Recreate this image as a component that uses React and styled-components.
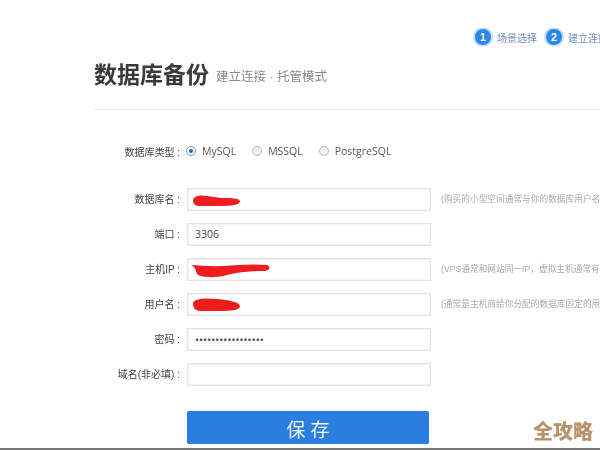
import React from "react";
import styled, { createGlobalStyle } from "styled-components";

const Global = createGlobalStyle`
  html, body { margin: 0; padding: 0; background: #fff; }
  body { width: 600px; height: 450px; overflow: hidden; font-family: "Liberation Sans", "Noto Sans CJK SC", sans-serif; }
`;
const Page = styled.div`
  position: relative; width: 600px; height: 450px; overflow: hidden; background: #fff;
  border-bottom: 2px solid #777; box-sizing: border-box;
`;
const Soft = styled.div`
  filter: blur(0.45px); height: 100%; padding: 28px 0 0 94px; box-sizing: border-box;
`;
const Steps = styled.div`
  display: flex; align-items: center; gap: 9px; height: 18px; padding-left: 381px; white-space: nowrap; width: 506px; box-sizing: border-box; overflow: hidden;
`;
const Step = styled.div`display: flex; align-items: center; gap: 6px; flex: none;`;
const Dot = styled.span`
  width: 16px; height: 16px; border-radius: 50%; background: #2a86ea; color: #fff; font-size: 11px; font-weight: bold;
  display: flex; align-items: center; justify-content: center; box-shadow: 0 0 0 2px #bfe0fb; flex: none;
`;
const StepText = styled.span`font-size: 10px; color: #6f8fb8;`;
const Heading = styled.div`
  display: flex; align-items: flex-start; gap: 7px; margin-top: 12px; height: 34px; white-space: nowrap;
`;
const Title = styled.h1`margin: 0; font-size: 23px; line-height: 34px; font-weight: 700; color: #3a3a3a;`;
const Sub = styled.span`padding-top: 2px; font-size: 12.5px; line-height: 34px; color: #8a8a8a;`;
const Divider = styled.hr`margin: 17px 0 0; border: 0; border-top: 1px solid #e6e6e6;`;
const TypeRow = styled.div`display: flex; align-items: center; height: 20px; margin: 31px 0 0 0; white-space: nowrap;`;
const Label = styled.label`
  flex: none; width: 86px; margin-right: 6px; padding-bottom: ${p => p.$lift || 0}px; text-align: right; font-size: 10px; color: #444; white-space: nowrap;
`;
const Radio = styled.span`
  flex: none; width: 10px; height: 10px; border-radius: 50%; border: 1px solid #b5b5b5; box-sizing: border-box;
  background: ${p => p.$on ? "#fff" : "#f2f2f2"}; display: flex; align-items: center; justify-content: center;
  ${p => p.$on && "border-color:#6d93c5;"} margin-left: ${p => p.$gap}px;
  &::after { content: ""; width: 4px; height: 4px; border-radius: 50%; background: ${p => p.$on ? "#2b5f9e" : "transparent"}; }
`;
const RadioText = styled.span`margin-left: 6px; font-size: 10.5px; color: #555; font-family: "Open Sans", sans-serif;`;
const Fields = styled.div`display: flex; flex-direction: column; gap: 12px; margin-top: 27px;`;
const Row = styled.div`display: flex; align-items: center; height: 23px; white-space: nowrap;`;
const InputBox = styled.div`
  position: relative; flex: none; width: 244px; height: 23px; margin-left: 1px; box-sizing: border-box; border: 1px solid #e4e4e4;
  box-shadow: inset 0 0 0 1px #f4f4f4; background: #fff;
  padding: 0 0 2px 7px; display: flex; align-items: center; font-size: 10.5px; color: #4a4a4a; font-family: "Open Sans", sans-serif;
`;
const Dots = styled.span`padding-top: 2px; font-size: 10.5px; letter-spacing: 0.1px; color: #444;`;
const Scribble = styled.svg`position: absolute; left: -1px; top: -1px; overflow: visible;`;
const Hint = styled.span`margin-left: 10px; padding-bottom: 2px; font-size: 8.7px; color: #a8a8a8;`;
const Save = styled.button`
  display: block; margin: 25px 0 0 93px; width: 242px; height: 33px; border: 0; border-radius: 2px; background: #2a7de1;
  color: #eef5fd; font-size: 19px; line-height: 33px; letter-spacing: 5px; text-indent: 5px; font-family: "Noto Sans CJK SC", sans-serif; padding: 1px 0 0;
`;
const Mark = styled.div`
  position: absolute; left: 533px; top: 418px; font-size: 20px; line-height: 26px; font-weight: 900; color: #b8926a;
  font-family: "Noto Sans CJK SC", sans-serif; white-space: nowrap;
`;

const Red = ({ d }) => (
  <Scribble width="244" height="23" viewBox="0 0 244 23" aria-hidden="true">
    <path d={d} fill="#ee1c1c" />
  </Scribble>
);

const rows = [
  { label: "数据库名 :", hint: "(购买的小型空间通常与你的数据库用户名一致", red: "M6 12 C8 7 14 7 20 8 L34 10 C44 10 52 10 53 13 C53 17 46 18 30 18 L14 18 C8 18 6 16 6 12Z" },
  { label: "端口 :", value: "3306" },
  { label: "主机IP :", hint: "(VPS通常和网站同一IP，虚拟主机通常有专用地址", red: "M4 7 L20 8 C40 9 60 5 80 7 C84 9 83 12 78 13 C60 13 48 15 40 17 C30 20 14 20 10 16 C8 12 10 11 4 7Z" },
  { label: "用户名 :", hint: "(通常是主机商给你分配的数据库固定的用户名", red: "M6 10 C8 5 20 5 30 6 C42 7 52 9 53 13 C53 17 46 18 30 18 L14 18 C8 18 6 15 6 10Z" },
  { label: "密码 :", dots: "•••••••••••••••••" },
  { label: "域名(非必填) :" },
];

export default function App() {
  return (
    <Page>
      <Global />
      <Soft>
        <Steps>
          <Step><Dot>1</Dot><StepText>场景选择</StepText></Step>
          <Step><Dot>2</Dot><StepText>建立连接</StepText></Step>
        </Steps>
        <Heading><Title>数据库备份</Title><Sub>建立连接 · 托管模式</Sub></Heading>
        <Divider />
        <TypeRow>
          <Label as="span">数据库类型 :</Label>
          <Radio $on $gap={0} /><RadioText>MySQL</RadioText>
          <Radio $gap={16} /><RadioText>MSSQL</RadioText>
          <Radio $gap={16} /><RadioText>PostgreSQL</RadioText>
        </TypeRow>
        <Fields>
          {rows.map(r => (
            <Row key={r.label}>
              <Label $lift={2}>{r.label}</Label>
              <InputBox>
                {r.value}
                {r.dots && <Dots>{r.dots}</Dots>}
                {r.red && <Red d={r.red} />}
              </InputBox>
              {r.hint && <Hint>{r.hint}</Hint>}
            </Row>
          ))}
        </Fields>
        <Save>保存</Save>
      </Soft>
      <Mark>全攻略</Mark>
    </Page>
  );
}
